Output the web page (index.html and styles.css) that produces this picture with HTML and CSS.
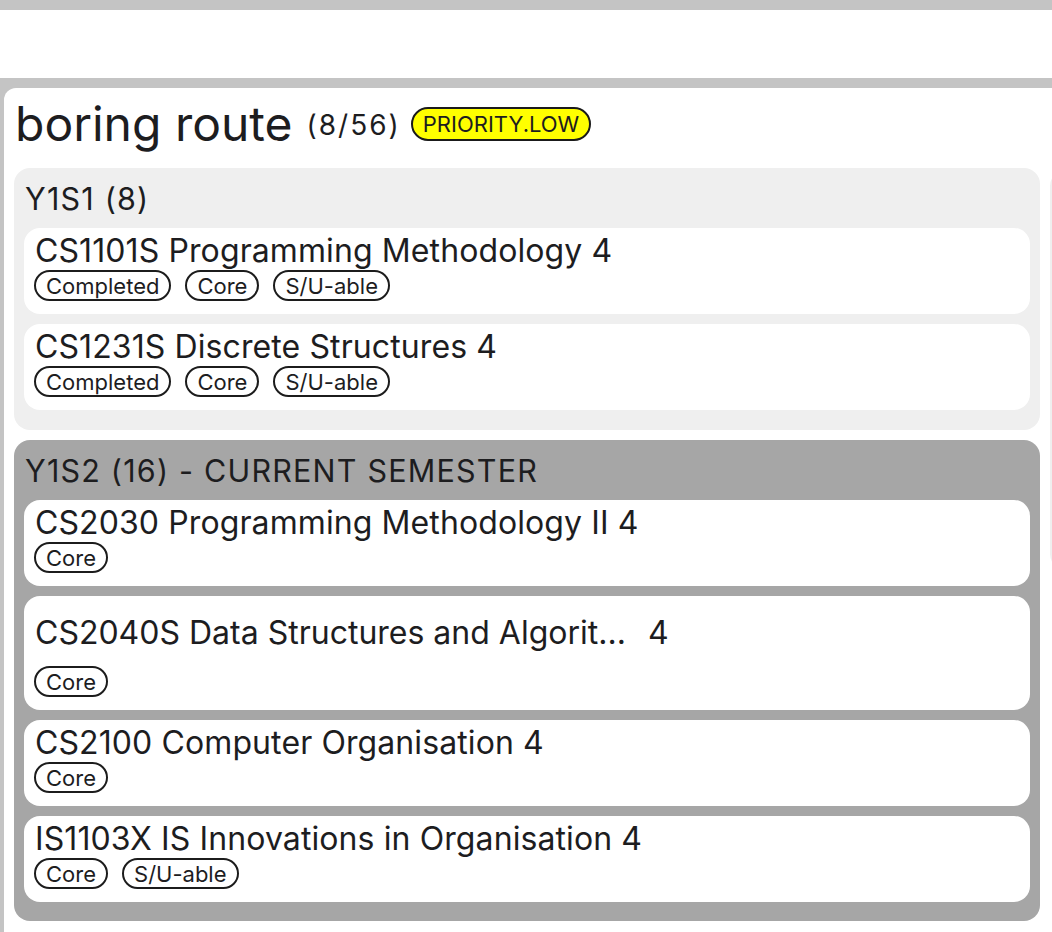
FILE: index.html
```html
<!DOCTYPE html>
<html lang="en">
<head>
<meta charset="utf-8">
<title>boring route</title>
<link rel="stylesheet" href="styles.css">
</head>
<body>
<div class="topbar"></div>
<div class="spacer"></div>
<div class="workspace">
  <div class="panel">
    <div class="route-head">
      <span class="route-name">boring route</span>
      <span class="route-count">(8/56)</span>
      <span class="priority">PRIORITY.LOW</span>
    </div>
    <div class="columns">
      <div class="column">
        <section class="sem sem-past">
          <div class="sem-title">Y1S1 (8)</div>
          <div class="mod">
            <div class="mod-title">CS1101S Programming Methodology 4</div>
            <div class="tags"><span class="tag">Completed</span><span class="tag">Core</span><span class="tag">S/U-able</span></div>
          </div>
          <div class="mod">
            <div class="mod-title">CS1231S Discrete Structures 4</div>
            <div class="tags"><span class="tag">Completed</span><span class="tag">Core</span><span class="tag">S/U-able</span></div>
          </div>
        </section>
        <section class="sem sem-current">
          <div class="sem-title">Y1S2 (16) - CURRENT SEMESTER</div>
          <div class="mod">
            <div class="mod-title">CS2030 Programming Methodology II 4</div>
            <div class="tags"><span class="tag">Core</span></div>
          </div>
          <div class="mod mod-tall">
            <div class="mod-title"><span class="trunc">CS2040S Data Structures and Algorit...</span><span class="mc">4</span></div>
            <div class="tags"><span class="tag">Core</span></div>
          </div>
          <div class="mod">
            <div class="mod-title">CS2100 Computer Organisation 4</div>
            <div class="tags"><span class="tag">Core</span></div>
          </div>
          <div class="mod">
            <div class="mod-title">IS1103X IS Innovations in Organisation 4</div>
            <div class="tags"><span class="tag">Core</span><span class="tag">S/U-able</span></div>
          </div>
        </section>
      </div>
      <div class="column column-next">
        <section class="sem sem-past sem-peek"></section>
      </div>
    </div>
  </div>
</div>
</body>
</html>
```

FILE: styles.css
```css
* { box-sizing: border-box; }
html, body { margin: 0; padding: 0; }
body {
  background: #ffffff;
  font-family: Inter, "Noto Sans", "Liberation Sans", sans-serif;
  color: #1d1d1f;
  width: 1052px;
  height: 932px;
  overflow: hidden;
}
.topbar { height: 10px; background: #c4c4c4; }
.spacer { height: 68px; background: #ffffff; }
.workspace {
  background: #c4c4c4;
  padding: 10px 0 0 4px;
  height: 854px;
  display: flex;
}
.panel {
  background: #ffffff;
  border-top-left-radius: 12px;
  padding: 8px 0 0 10px;
  flex: 1;
  overflow: hidden;
}
.route-head {
  display: flex;
  align-items: center;
  height: 60px;
  margin-bottom: 12px;
}
.route-name { font-size: 48px; line-height: 60px; margin-left: 1px; margin-top: -4px; }
.route-count { font-size: 28px; letter-spacing: 2px; margin-left: 14px; margin-top: -3px; }
.priority {
  margin-left: 10px;
  background: #ffff00;
  border: 2px solid #1a1a1a;
  border-radius: 17px;
  height: 34px;
  padding: 0 10px;
  font-size: 22px;
  display: flex;
  align-items: center;
  margin-top: -4px;
}
.columns { display: flex; gap: 10px; }
.column { width: 1026px; flex: none; display: flex; flex-direction: column; gap: 10px; }
.column-next { width: 200px; padding-top: 2px; }
.sem {
  border-radius: 16px;
  padding: 12px 10px 20px 10px;
  display: flex;
  flex-direction: column;
  gap: 10px;
}
.sem-past { background: #efefef; }
.sem-current { background: #a6a6a6; padding-bottom: 19px; }
.sem-peek { height: 400px; }
.sem-title { font-size: 30.5px; letter-spacing: 1.2px; line-height: 38px; padding-left: 1px; }
.mod {
  background: #ffffff;
  border-radius: 16px;
  padding: 4px 10px 13px 10px;
}
.mod-title { font-size: 32px; letter-spacing: 0.1px; line-height: 38px; padding-left: 1px; white-space: nowrap; }
.mod-tall .mod-title { line-height: 66px; display: flex; }
.trunc { letter-spacing: 0; }
.mc { margin-left: 22px; }
.tags { display: flex; gap: 14px; }
.tag {
  border: 2px solid #1c1c1c;
  border-radius: 16px;
  height: 31px;
  padding: 0 10px;
  font-size: 22px;
  display: flex;
  align-items: center;
}
```
